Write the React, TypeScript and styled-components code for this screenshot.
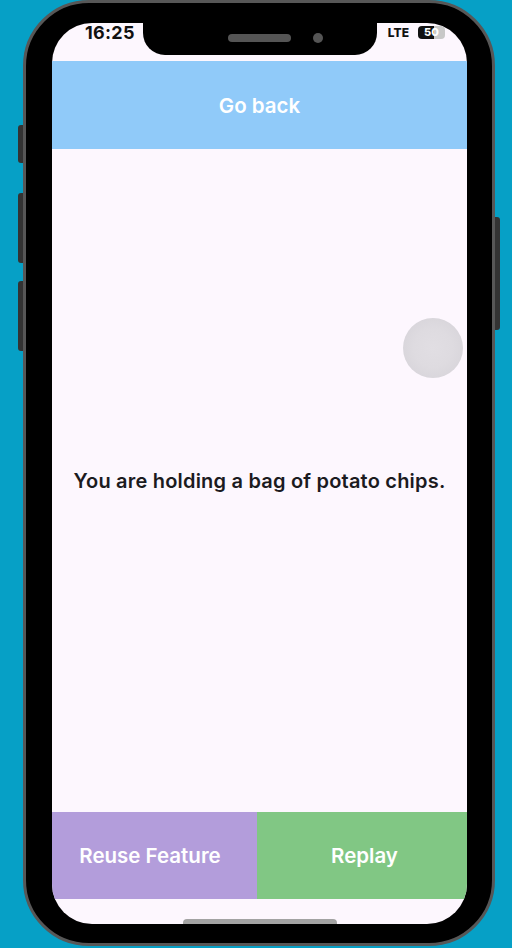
import { createGlobalStyle, styled } from "styled-components";

const GlobalStyle = createGlobalStyle`
    html, body {
        margin: 0;
        padding: 0;
        background: #06a0c6;
        font-family: Inter, "Noto Sans", "Liberation Sans", sans-serif;
    }
`

const Stage = styled.div`
    width: 512px;
    height: 948px;
    overflow: hidden;
    background: #06a0c6;
`

const Phone = styled.div`
    position: relative;
    box-sizing: border-box;
    margin-left: 23px;
    width: 472px;
    height: 946px;
    border: 3px solid #575757;
    border-radius: 66px;
    background: #000;
    padding: 20px 25px 19px 26px;
`

const SideKey = styled.div<{ $side: "left" | "right"; $top: number; $height: number }>`
    position: absolute;
    top: ${p => p.$top}px;
    height: ${p => p.$height}px;
    width: 5px;
    background: #333;
    ${p => p.$side === "left"
        ? "left: -8px; border-radius: 3px 0 0 3px;"
        : "right: -8px; border-radius: 0 3px 3px 0;"}
`

const Screen = styled.div`
    position: relative;
    height: 100%;
    display: flex;
    flex-direction: column;
    overflow: hidden;
    border-radius: 40px;
    background: #fdf7fe;
`

const Notch = styled.div`
    position: absolute;
    top: -2px;
    left: 91px;
    width: 234px;
    height: 34px;
    background: #000;
    border-radius: 0 0 22px 22px;
    display: flex;
    align-items: center;
    justify-content: center;
    gap: 22px;
    padding-left: 30px;
    box-sizing: border-box;
`

const Speaker = styled.span`
    width: 63px;
    height: 8px;
    border-radius: 4px;
    background: #555;
`

const Camera = styled.span`
    width: 10px;
    height: 10px;
    border-radius: 50%;
    background: #555;
`

const StatusBar = styled.div`
    height: 38px;
    flex-shrink: 0;
    display: flex;
    align-items: flex-start;
    justify-content: space-between;
    padding: 0 22px 0 33px;
`

const Clock = styled.span`
    font-size: 18px;
    font-weight: 700;
    color: #111;
    line-height: 20px;
    letter-spacing: 0.3px;
`

const Signal = styled.div`
    display: flex;
    align-items: center;
    gap: 9px;
    padding-top: 2px;
`

const Lte = styled.span`
    font-size: 12px;
    font-weight: 800;
    color: #111;
`

const Battery = styled.span`
    width: 27px;
    height: 13px;
    border-radius: 4px;
    background: linear-gradient(90deg, #111 0%, #111 58%, #c8c8c8 58%, #c8c8c8 100%);
    color: #fff;
    font-size: 11px;
    font-weight: 800;
    line-height: 13px;
    text-align: center;
`

const Header = styled.button`
    height: 88px;
    flex-shrink: 0;
    border: none;
    background: #90caf9;
    color: #fff;
    font-family: inherit;
    font-size: 20.5px;
    font-weight: 600;
    cursor: pointer;
`

const Content = styled.div`
    position: relative;
    flex: 1;
    display: flex;
    align-items: center;
    justify-content: center;
`

const Message = styled.p`
    margin: 0;
    font-size: 20px;
    font-weight: 600;
    letter-spacing: 0.2px;
    color: #1c1b1f;
`

const FloatingBall = styled.div`
    position: absolute;
    top: 169px;
    right: 4px;
    width: 60px;
    height: 60px;
    border-radius: 50%;
    background: radial-gradient(circle, #e1dee3 0%, #dedbe0 45%, #d4d1d7 100%);
`

const ActionRow = styled.div`
    height: 87px;
    flex-shrink: 0;
    display: grid;
    grid-template-columns: 205fr 210fr;
`

const ActionButton = styled.button<{ $color: string; $shift: number }>`
    border: none;
    background: ${p => p.$color};
    color: #fff;
    font-family: inherit;
    font-size: 20.5px;
    font-weight: 600;
    cursor: pointer;
    padding: 0;
    padding-left: ${p => (p.$shift > 0 ? p.$shift : 0)}px;
    padding-right: ${p => (p.$shift < 0 ? -p.$shift : 0)}px;
`

const BottomArea = styled.div`
    height: 25px;
    flex-shrink: 0;
    display: flex;
    justify-content: center;
`

const HomeIndicator = styled.span`
    margin-top: 20px;
    width: 154px;
    height: 8px;
    border-radius: 4px;
    background: #a3a3a3;
`

const App = () => {
    return (
    <>
        <GlobalStyle />
        <Stage>
            <Phone>
                <SideKey $side="left" $top={122} $height={38} />
                <SideKey $side="left" $top={190} $height={70} />
                <SideKey $side="left" $top={278} $height={70} />
                <SideKey $side="right" $top={214} $height={113} />
                <Screen>
                    <StatusBar>
                        <Clock>16:25</Clock>
                        <Signal>
                            <Lte>LTE</Lte>
                            <Battery>50</Battery>
                        </Signal>
                    </StatusBar>
                    <Notch>
                        <Speaker />
                        <Camera />
                    </Notch>
                    <Header>Go back</Header>
                    <Content>
                        <Message>You are holding a bag of potato chips.</Message>
                        <FloatingBall />
                    </Content>
                    <ActionRow>
                        <ActionButton $color="#b39ddb" $shift={-9}>Reuse Feature</ActionButton>
                        <ActionButton $color="#81c784" $shift={5}>Replay</ActionButton>
                    </ActionRow>
                    <BottomArea>
                        <HomeIndicator />
                    </BottomArea>
                </Screen>
            </Phone>
        </Stage>
    </>
    )
}

export default App;
